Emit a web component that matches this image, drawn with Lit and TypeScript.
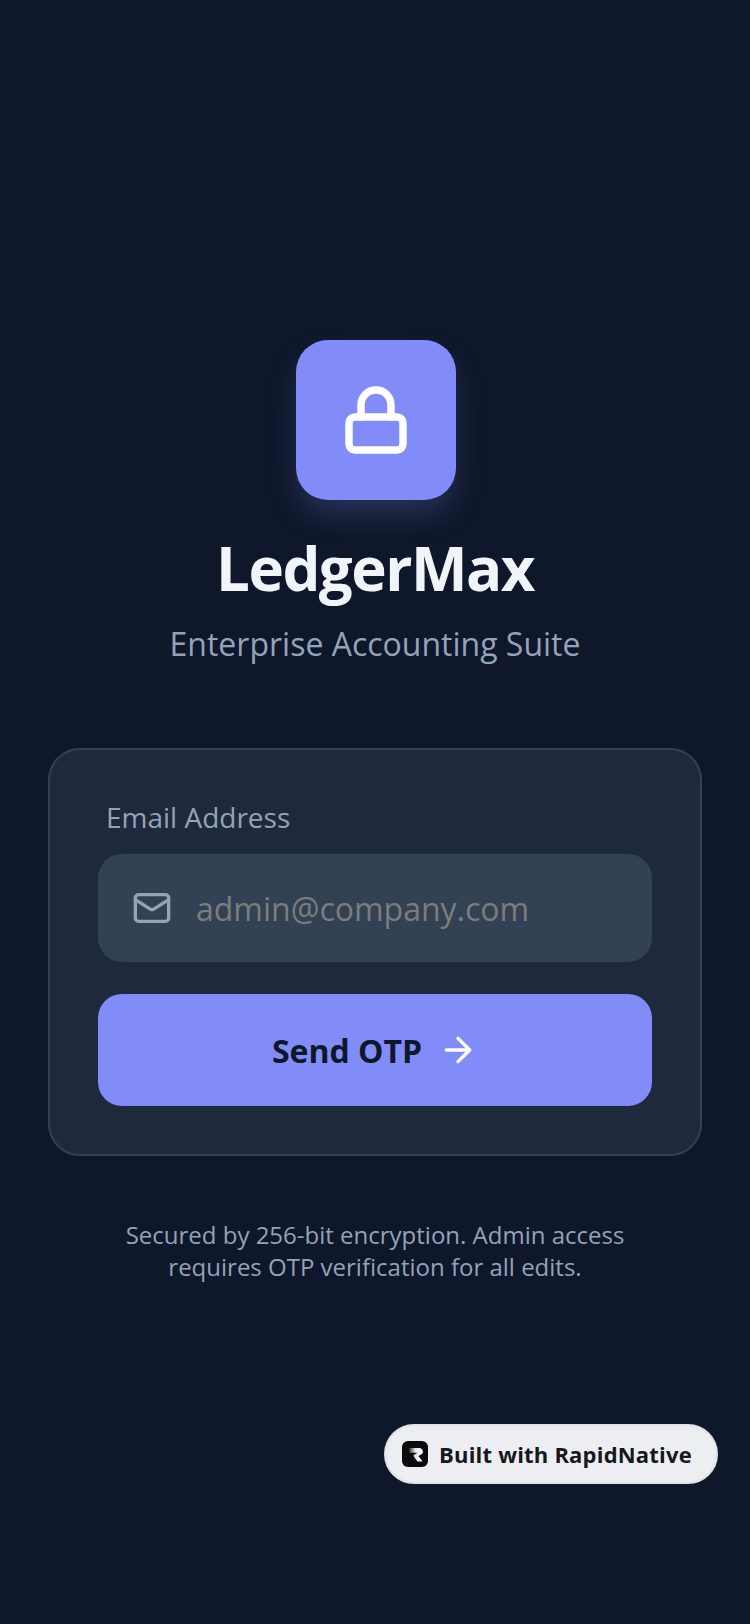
import { LitElement, html, css } from "lit";
import { customElement } from "lit/decorators.js";

@customElement("app-root")
export class AppRoot extends LitElement {
  static styles = css`
    :host {
      display: block;
      position: relative;
      width: 750px;
      height: 1624px;
      overflow: hidden;
      background: #0f172a;
      font-family: "Open Sans", "Noto Sans", sans-serif;
    }
    .page {
      display: flex;
      flex-direction: column;
      align-items: center;
      padding: 340px 48px 0;
    }
    .logo {
      width: 160px;
      height: 160px;
      margin-left: 1px;
      border-radius: 32px;
      background: #818cf8;
      box-shadow: 0 16px 32px -4px rgba(129, 140, 248, 0.25);
      display: flex;
      align-items: center;
      justify-content: center;
    }
    h1 {
      margin: 32px 0 0;
      font-size: 60px;
      line-height: 72px;
      font-weight: 700;
      color: #f1f5f9;
      letter-spacing: -1.5px;
    }
    .sub {
      margin: 16px 0 0;
      font-size: 32px;
      line-height: 48px;
      color: #94a3b8;
    }
    .card {
      box-sizing: border-box;
      align-self: stretch;
      margin-top: 80px;
      padding: 48px;
      border: 2px solid #334155;
      border-radius: 32px;
      background: #1e293b;
      display: flex;
      flex-direction: column;
    }
    .label {
      margin: 0 0 18px 8px;
      font-size: 28px;
      line-height: 38px;
      color: #94a3b8;
    }
    .input {
      height: 108px;
      border-radius: 24px;
      background: #334155;
      display: flex;
      align-items: center;
      padding: 0 34px;
      gap: 24px;
      font-size: 32px;
      color: #7c7c7c;
    }
    .btn {
      margin-top: 32px;
      height: 112px;
      border-radius: 24px;
      background: #818cf8;
      display: flex;
      align-items: center;
      justify-content: center;
      gap: 16px;
      font-size: 32px;
      font-weight: 700;
      color: #0f172a;
    }
    .note {
      margin: 63px 0 0;
      font-size: 24px;
      line-height: 32px;
      text-align: center;
      color: #94a3b8;
    }
    .badge {
      position: absolute;
      left: 384px;
      top: 1424px;
      box-sizing: border-box;
      width: 334px;
      height: 60px;
      border-radius: 30px;
      border: 2px solid #e0e2e8;
      background: #eceef1;
      display: flex;
      align-items: center;
      padding-left: 16px;
      gap: 11px;
      font-size: 22px;
      font-weight: 700;
      letter-spacing: 0.2px;
      color: #16181d;
    }
    svg { display: block; flex: none; }
  `;

  render() {
    return html`
      <div class="page">
        <div class="logo">
          <svg width="72" height="72" viewBox="0 0 24 24" fill="none" stroke="#fff" stroke-width="2.500" stroke-linecap="round" stroke-linejoin="round">
            <rect x="3" y="11" width="18" height="11" rx="2"></rect>
            <path d="M7 11V7a5 5 0 0 1 10 0v4"></path>
          </svg>
        </div>
        <h1>LedgerMax</h1>
        <p class="sub">Enterprise Accounting Suite</p>
        <div class="card">
          <div class="label">Email Address</div>
          <div class="input">
            <svg width="40" height="40" viewBox="0 0 24 24" fill="none" stroke="#94a3b8" stroke-width="2" stroke-linecap="round" stroke-linejoin="round">
              <rect x="2" y="4" width="20" height="16" rx="2"></rect>
              <path d="m22 7-8.970 5.700a1.940 1.940 0 0 1-2.060 0L2 7"></path>
            </svg>
            <span>admin@company.com</span>
          </div>
          <div class="btn">
            <span>Send OTP</span>
            <svg width="40" height="40" viewBox="0 0 24 24" fill="none" stroke="#fff" stroke-width="2" stroke-linecap="round" stroke-linejoin="round">
              <path d="M5 12h14"></path>
              <path d="m12 5 7 7-7 7"></path>
            </svg>
          </div>
        </div>
        <p class="note">Secured by 256-bit encryption. Admin access<br />requires OTP verification for all edits.</p>
      </div>
      <div class="badge">
        <svg width="26" height="26" viewBox="0 0 26 26">
          <defs>
            <linearGradient id="r" x1="0" y1="0" x2="1" y2="0">
              <stop offset="0" stop-color="#2a2a2c"></stop>
              <stop offset="0.45" stop-color="#e8e8e8"></stop>
              <stop offset="1" stop-color="#ffffff"></stop>
            </linearGradient>
          </defs>
          <rect width="26" height="26" rx="6" fill="#0b0b0d"></rect>
          <path d="M7 7h10.500a3.500 3.500 0 0 1 2 6.300L16.500 15l4 5.500h-5l-4.500-6 4.500-2.700H7z" fill="url(#r)"></path>
        </svg>
        <span>Built with RapidNative</span>
      </div>
    `;
  }
}
